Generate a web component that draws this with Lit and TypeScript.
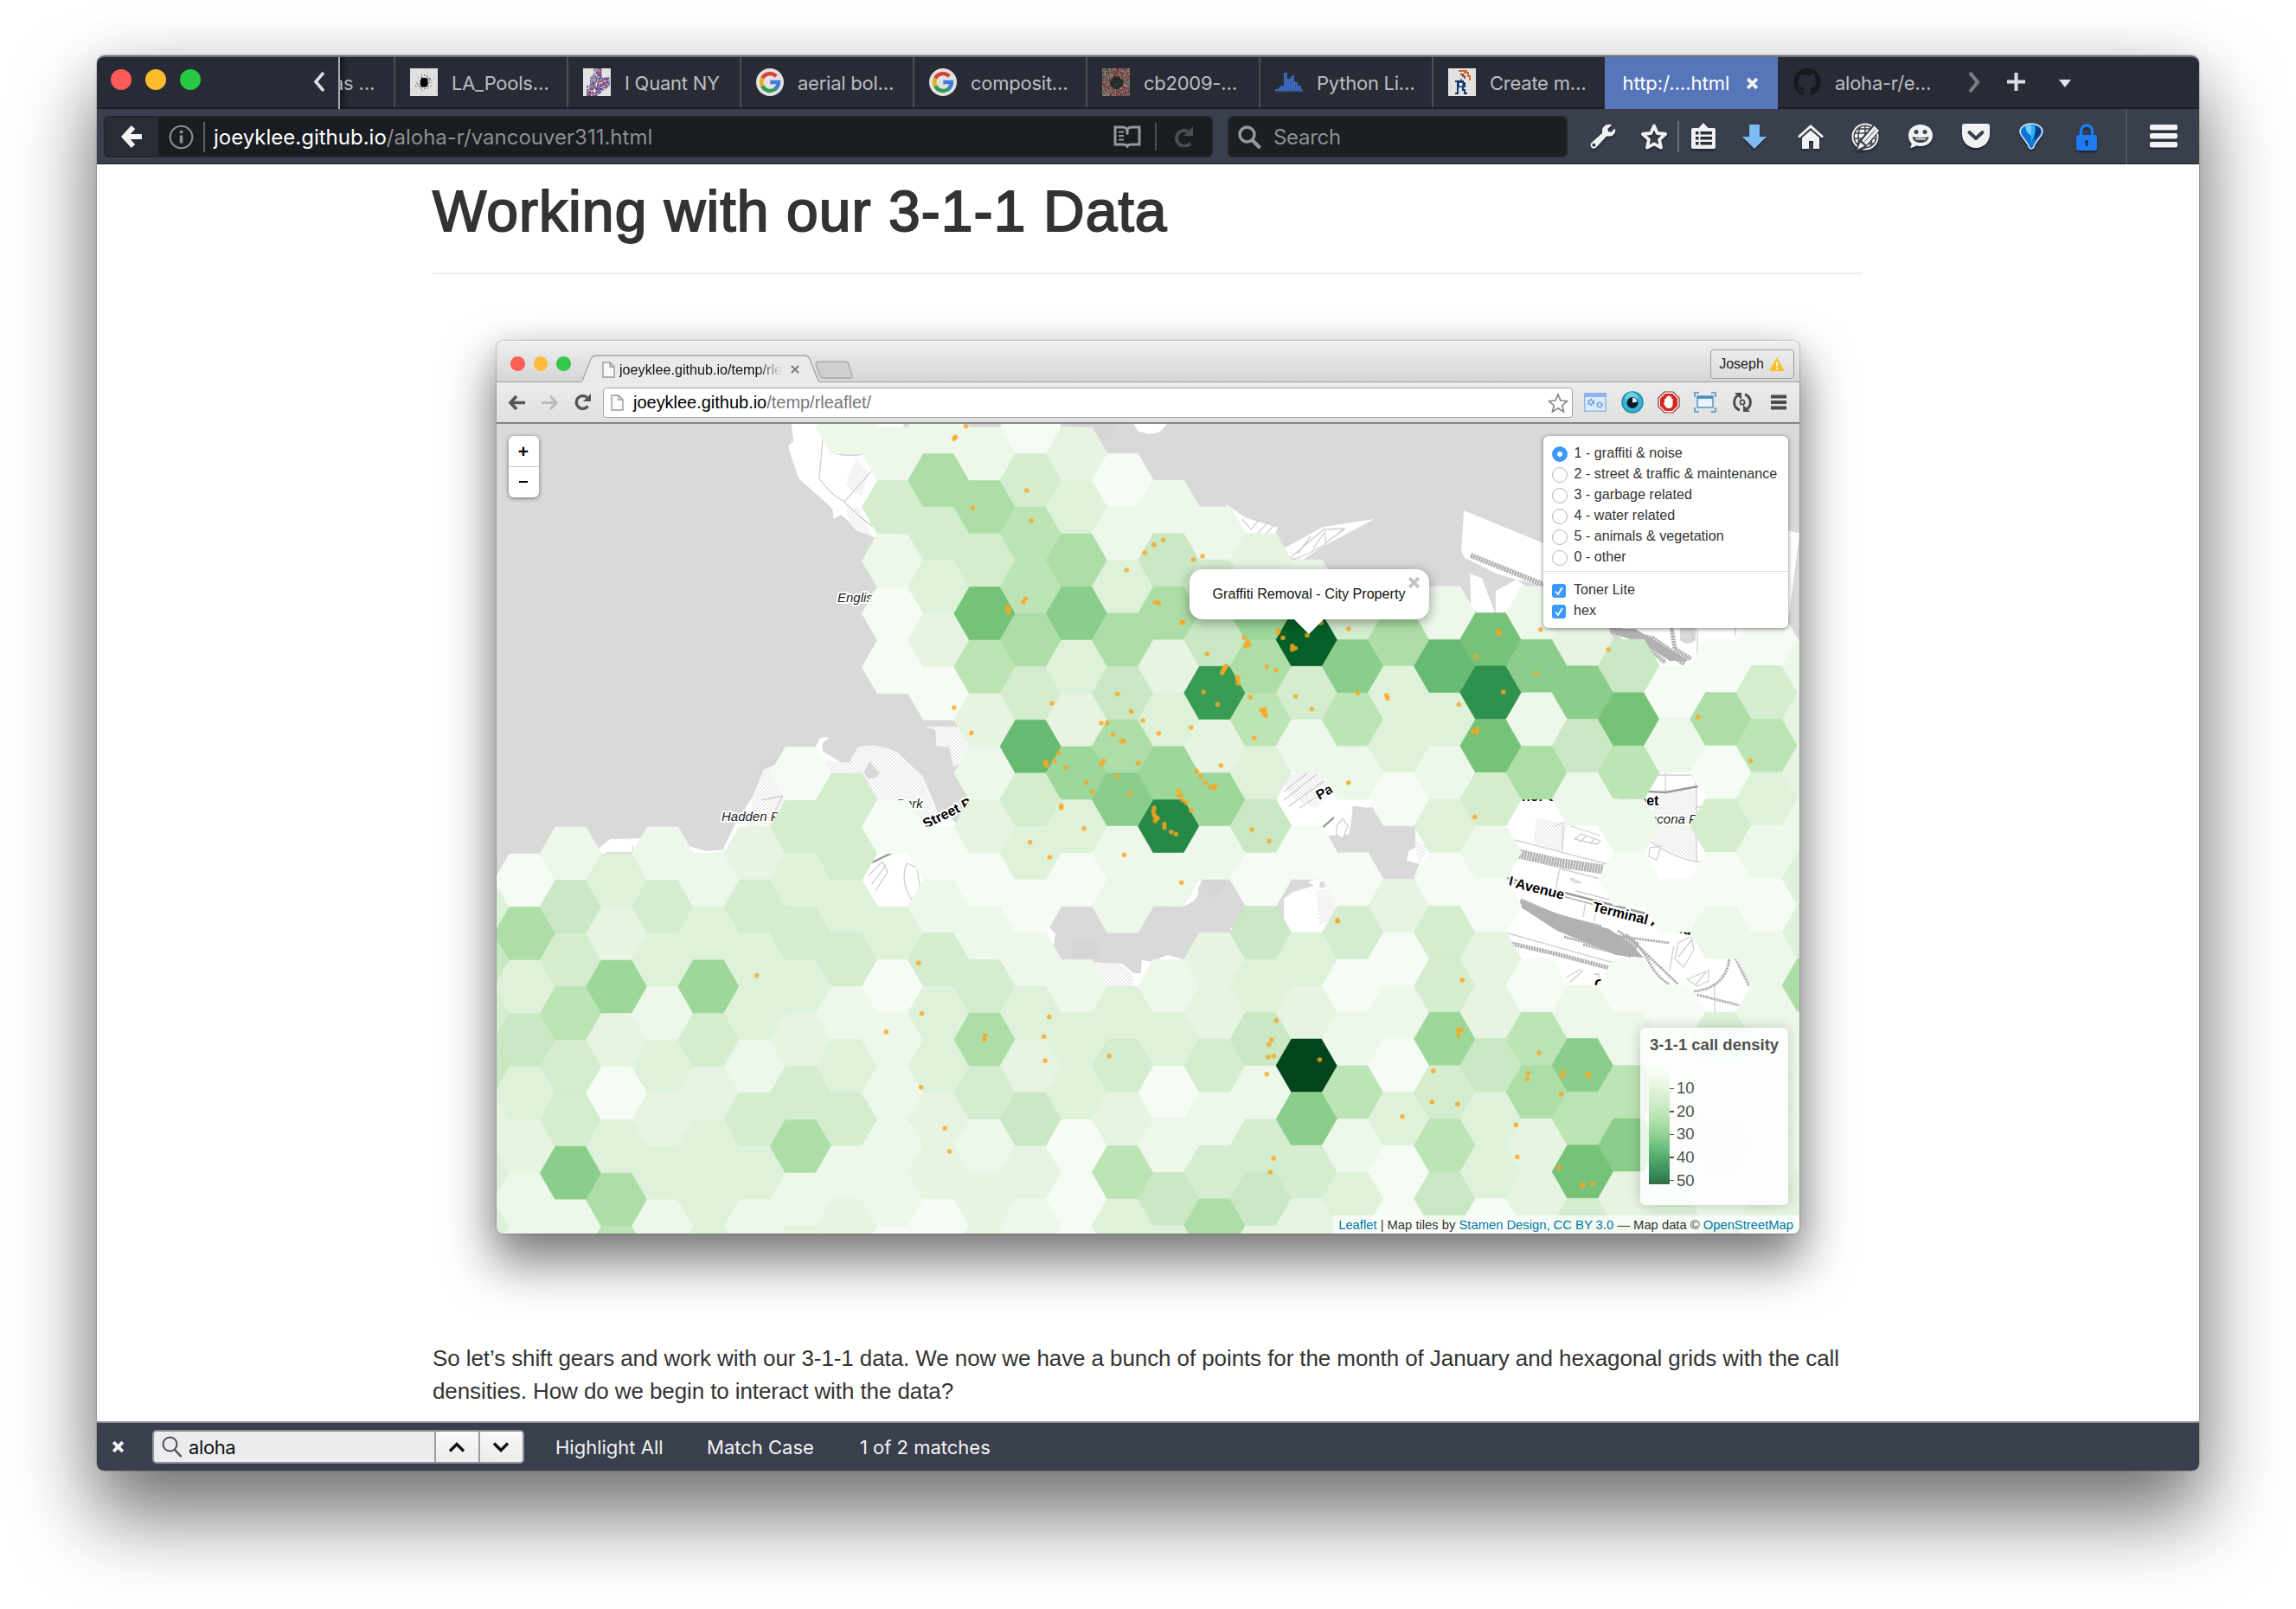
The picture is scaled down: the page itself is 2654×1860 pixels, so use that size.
import { LitElement, html, svg, css } from "lit";
import { customElement } from "lit/decorators.js";
import { classMap } from "lit/directives/class-map.js";

/* ---------- hexagon grid ---------- */

const SHADES: Record<string, string> = {
  a: "#f5fcf3", b: "#edf8eb", c: "#e6f4e1", d: "#def2da", e: "#d3edce", f: "#c9e8c3",
  g: "#bce4b5", h: "#aedea7", i: "#9dd799", j: "#8bcd8b", k: "#76c278", l: "#68ba72",
  m: "#389c54", q: "#2f914e", n: "#268947", o: "#055f28", p: "#02441b",
};

/* One string per column, top to bottom; a dot is a cell with no data. */
const COLUMNS: string[] = [
  "........ahdfdcbb",
  "........bfegeejb",
  "........dcicadhg",
  "........bedbdcdb",
  "........bdiecddd",
  "........ceddbedb",
  "......aededcehbc",
  "b......eedebdebc",
  "bebaa..a.dabbbba",
  "bhedca..abeddcca",
  "bhekgcbcabehebcc",
  "aeggheledabdcfcb",
  "cdhjdcida.bddaaa",
  ".abdhfhjbb.decgd",
  ".bfhcdinb.bdabfd",
  "..befmcib.ccebeh",
  "..cihgdfafdfbefc",
  "...boeb.a.dcpjec",
  "...ejgb.aeabgbdc",
  "....hdda.cabadaa",
  "...bldbdaeeiegfb",
  "....kqkebaccfdda",
  "...bjbh...aghccd",
  "....cjfb...bjgke",
  "....fkgba.abgjce",
  ".....ab..a.abcbd",
  "....ahaeab.dacbg",
  "....aegdbabbbbbc",
  "....bccbddhbbbcc",
];
/* the narrow sliver left of the first full column */
const SLIVER = ".........dfefcdd";

const PITCH_X = 53.18;
const PITCH_Y = 61.55;
const RADIUS = 35.6;

const hexPoints = (cx: number, cy: number) => {
  const h = PITCH_Y / 2;
  const r = RADIUS;
  return [[-r, 0], [-r / 2, -h], [r / 2, -h], [r, 0], [r / 2, h], [-r / 2, h]]
    .map(([x, y]) => `${(cx + x).toFixed(1)},${(cy + y).toFixed(1)}`)
    .join(" ");
};

const column = (cells: string, k: number) =>
  [...cells].map((c, j) => {
    if (c === ".") return null;
    const cx = 606.5 + PITCH_X * k;
    const base = k % 2 === 0 ? 1017.8 : 986.8;
    const cy = base + PITCH_Y * (j - 8) - 0.07 * k;
    const fill = SHADES[c];
    return svg`<polygon points=${hexPoints(cx, cy)} fill=${fill} stroke=${fill} stroke-width=".5"/>`;
  });

/* ---------- call locations ---------- */

interface Batch { x: number; y: number; sx: number; sy: number; at: string }

const BATCHES: Batch[] = [
  {
    x: 1180, y: 600, sx: 3, sy: 3,
    at: "36,6 430,117 462,89 494,73 367,177 598,141 630,129 16,276 8,288 466,288 478,292 558,360 562,356 646,468 774,412 786,426 780,440 792,436 784,432 894,386 892,394 909,412 941,440 941,452 952,448 993,403 1041,360 1136,380 853,512 885,524 712,510 706,518 702,526 698,534 708,514 750,548 752,558 754,570 634,600 682,643 795,617 834,662 846,660 846,668 849,682 842,674 953,615 1009,659 1168,603 1268,611 1272,622 1519,643 335,607 383,667 108,639 279,707 299,707 319,747 348,770 358,770 423,699 478,743 590,723 809,759 407,847 287,839 279,850 132,811 116,838 84,846 90,854 88,842 156,862 228,914 248,946 332,892 379,954 140,994 140,1001 219,1073 32,1121 100,1173 359,1165 694,854 610,874 624,892 640,915 658,930 670,932 674,926 546,942 548,960 554,958 562,974 574,984 590,1010 462,1002 460,1014 462,1026 468,1034 474,1038 466,1046 498,1058 498,1070 522,1085 538,1093 801,1077 861,1117 1136,914",
  },
  { x: 560, y: 380, sx: 2.063, sy: 3, at: "1148,338 1123,375 1120,382 1164,621 1293,561 1248,965 1249,975 1249,984 1120,1314" },
  { x: 1320, y: 380, sx: 2.01, sy: 3, at: "828,1050 831,1058 926,1043 776,1136 1084,1112 916,1195 840,1259 1292,1346" },
  {
    x: 1320, y: 840, sx: 2.01, sy: 2.613,
    at: "769,15 778,8 778,16 1414,103 773,273 454,585 455,588 92,471 744,766 738,916 736,932 735,918 741,915 312,888 301,946 295,960 293,998 306,995 290,1050 413,1006 677,1040 674,1134 733,1140 605,1178 923,985 897,1047 895,1064 979,1045 975,1058 1036,1050 1038,1056 974,1110 869,1203 872,1300 969,1332 1023,1386 1026,1384 1048,1381 306,1304 298,1346",
  },
  {
    x: 560, y: 840, sx: 2.063, sy: 2.613,
    at: "1161,19 649,752 1035,714 1043,867 958,922 1194,933 1192,946 1347,877 1334,936 1337,1009 1490,995 1041,1089 1098,1213 1109,1283",
  },
];

const calls = BATCHES.map((b) =>
  b.at.split(" ").map((p) => {
    const [x, y] = p.split(",").map(Number);
    return svg`<circle cx=${(b.x + x / b.sx).toFixed(1)} cy=${(b.y + y / b.sy).toFixed(1)} r="2.8"/>`;
  }));

/* ---------- pixel favicons ---------- */

const noise = (n: number, pick: (x: number, y: number, r: number) => string | null) => {
  let seed = 7;
  const cells = [];
  for (let y = 0; y < n; y++)
    for (let x = 0; x < n; x++) {
      seed = (seed * 48271) % 2147483647;
      const c = pick(x, y, seed / 2147483647);
      if (c) cells.push(svg`<rect x=${x} y=${y} width="1.05" height="1.05" fill=${c}/>`);
    }
  return cells;
};

const fav = {
  pools: svg`<svg class="fav" viewBox="0 0 32 32"><rect width="32" height="32" fill="#ececec"/>
    ${noise(32, (x, y, r) => { const d = Math.hypot(x - 16, y - 16); return r < 0.7 - d / 16 ? (r < 0.2 ? "#888" : "#b4b4b4") : r > 0.92 ? "#d0d0d0" : null; })}
    <rect x="12" y="11" width="8.500" height="10.500" rx="3" fill="#050505"/></svg>`,
  quant: svg`<svg class="fav" viewBox="0 0 24 24"><rect width="24" height="24" fill="#ececec"/>
    ${noise(24, (x, y, r) => {
      const inside = y < 8 ? x > 9 - y * 0.3 && x < 16 : y < 15 ? x > 5 && x < 23 : x > 2 && x < 22 - (y - 15) * 1.3;
      return inside && r < 0.72 ? ["#b5263b", "#4a3fa0", "#2f6fae", "#6e4fa0", "#c04a55", "#3a3a90"][Math.floor(r * 8.3)] : null;
    })}</svg>`,
  google: svg`<svg class="fav" viewBox="0 0 32 32"><circle cx="16" cy="16" r="16" fill="#ececec"/>
    <g fill="none" stroke-width="4.400"><path d="M23.200 9.200A10 10 0 0 0 7.200 11.400" stroke="#e04436"/>
    <path d="M7.200 11.400A10 10 0 0 0 7.200 20.600" stroke="#f0b41a"/><path d="M7.200 20.600A10 10 0 0 0 22.600 23.600" stroke="#32a350"/>
    <path d="M22.400 23.700A10 10 0 0 0 26 16H16.300" stroke="#427fe6"/></g></svg>`,
  cb: svg`<svg class="fav" viewBox="0 0 24 24"><rect width="24" height="24" fill="#5a4a46"/>
    ${noise(24, (x, y, r) => { const d = Math.hypot(x - 12, y - 12); return d < 5.5 ? (r < 0.6 ? "#20201f" : "#3d2a20") : ["#b93038", "#4f8f7f", "#7b3a35", "#9ab0a6", "#3d5a50", "#c04850"][Math.floor(r * 6)]; })}
    <rect x="12" y="12" width="4" height="3" fill="#0d3c52"/></svg>`,
  python: svg`<svg class="fav" viewBox="0 0 16 16">
    ${[12, 12, 11, 10, 10, 2.5, 2.5, 6, 6, 4.5, 4, 7.5, 8, 10, 10, 12].map((top, x) => svg`<rect x=${x} y=${top} width=".86" height=${13 - top} fill="#3f72d0"/>`)}
    <path d="M0 13.300h16" stroke="#2f4d84" stroke-width=".7"/></svg>`,
  r: svg`<svg class="fav" viewBox="0 0 16 16"><rect width="16" height="16" fill="#ececec"/>
    <path fill="#12366e" d="M4 7h5v1h1v3H9v1h1v2h1v1H9v-2H8v-2H6v4H4v-1h1V8H4z"/><path fill="#fff" d="M6.400 8.400h1.800v1.800H6.400z"/>
    <path fill="#e0672e" d="M6 1h5v1h1v2h1v3h-1V5h-1V3H9V2H6zM7 6h1v1H7z"/><path fill="#7b5560" d="M7 3h2v1h1v2H9V5H8V4H7z"/></svg>`,
  github: svg`<svg class="fav" viewBox="0 0 16 16"><path fill="#16181b" d="M8 0C3.580 0 0 3.580 0 8c0 3.540 2.290 6.530 5.470 7.590.4.070.55-.17.55-.38 0-.19-.01-.82-.01-1.490-2.010.37-2.530-.49-2.690-.94-.09-.23-.48-.94-.82-1.130-.28-.15-.68-.52-.01-.53.63-.01 1.080.58 1.230.82.72 1.210 1.870.87 2.330.66.07-.52.28-.87.51-1.070-1.780-.2-3.640-.89-3.640-3.950 0-.87.31-1.590.82-2.150-.08-.2-.36-1.020.08-2.120 0 0 .67-.21 2.200.82.64-.18 1.320-.27 2-.27s1.360.09 2 .27c1.530-1.040 2.200-.82 2.200-.82.44 1.100.16 1.920.08 2.120.51.56.82 1.270.82 2.150 0 3.070-1.870 3.750-3.650 3.950.29.25.54.73.54 1.480 0 1.070-.01 1.930-.01 2.200 0 .21.15.46.55.38A8.010 8.010 0 0 0 16 8c0-4.420-3.580-8-8-8z"/></svg>`,
};

/* ---------- Firefox toolbar icons ---------- */

const W = "#f1f2f3";
const tools = {
  wrench: svg`<path fill=${W} fill-rule="evenodd" d="M27.200 2.400 22.400 7l.6 3.200 3.400.6 4.400-4.400c1.600 4.600-2 9.400-7 9.200-1.600 0-2.400-.2-3.200.4L10 27.600c-1.400 1.800-4 3-6.200 1.200-2-1.800-1.600-4.800.4-6.400L15.400 12.600c.8-.8.8-1.800.6-3.200C15.800 4.400 21.800 0 27.200 2.400zM6.400 23.800a1.900 1.900 0 1 0 .01 0z"/>`,
  star: svg`<path fill="none" stroke=${W} stroke-width="3.800" stroke-linejoin="round" d="m16 3.400 3.700 8.600 9.300 1-6.900 6.400 1.900 9.200L16 24.400l-8 4.200 1.900-9.200L3 13l9.300-1z"/>`,
  list: svg`<path fill=${W} fill-rule="evenodd" d="M4 6h6.500L16 0l5.500 6H28q2 0 2 2v20q0 2-2 2H4q-2 0-2-2V8q0-2 2-2zM7 10v3.500h3.500V10zM12.500 10v3.500H26V10zM7 16v3.500h3.500V16zM12.500 16v3.500H26V16zM7 22v3.500h3.500V22zM12.500 22v3.500H26V22z"/>`,
  down: svg`<path fill="#7cbcf3" d="M10 2h12v14h8L16 30 2 16h8z"/>`,
  home: svg`<path fill=${W} d="M16 2 31 15.500l-2 2L16 6 3 17.500l-2-2z"/><path fill=${W} d="M6 17.200 16 8.400l10 8.800V30h-7V21h-5v9H6z"/>`,
  globe: svg`<circle cx="16" cy="16" r="15.500" fill=${W}/>
    <g fill="none" stroke="#3a3f4d" stroke-width="1.500"><circle cx="16" cy="16" r="12.800"/><path d="M4 12h24M4 18h24M6 24h20M6.500 7h19"/><path d="M16 3v26M10 5q-4 11 0 22M22 5q4 11 0 22"/></g>
    <path d="M5 33 8 21.500 25.500 2l7.500 7-17.500 21z" fill="#3a3f4d"/><path fill=${W} d="m26.500 3.500 5.500 5.500-14.500 16.500-5.500-5zM10.500 22.500l4.800 4.300L7 30.800z"/><path d="m15.500 21.500 12.500-13.700" stroke="#3a3f4d" stroke-width="1"/>`,
  smile: svg`<path fill=${W} d="M16 2c8 0 14 5 14 12.500S24 27 16 27c-2 0-3.500-.2-5-.7-2 1.700-4.500 2.700-7.500 2.400 1.500-1.200 2.200-2.800 2.200-4.700C3.200 21.500 2 18.500 2 14.500 2 7 8 2 16 2z"/><g fill="#3a3f4d"><circle cx="11" cy="10.500" r="2.500"/><circle cx="21" cy="10.500" r="2.500"/><path d="M6.500 16c3 1.500 16 1.500 19 0-1 5-4.500 7-9.500 7s-8.500-2-9.500-7z"/></g><path d="M10 18.700h12" stroke=${W} stroke-width="1.600"/>`,
  pocket: svg`<path fill=${W} d="M3 1h26q3 0 3 3v9c0 9-7 16-16 16S0 22 0 13V4q0-3 3-3z"/><path d="m8.500 11 7.500 7 7.500-7" fill="none" stroke="#3a3f4d" stroke-width="4" stroke-linecap="round" stroke-linejoin="round"/>`,
  pin: svg`<path fill="#0b74d8" stroke="#d8e6f2" stroke-width="1.600" d="M16 1C8 1 3 5.500 3 10c0 6 8.500 10.500 10.500 18.500q2.500 3 5 0C20.500 20.500 29 16 29 10c0-4.500-5-9-13-9z"/><path fill="#6fd0ff" d="M9 3.800Q12 2 16 2v13Q10 12 9 3.800z"/><path fill="#053c86" d="M20 3q7 2 7 7c0 4-5 7-7.500 11z"/><path fill="#2fb0f5" d="M16 3h4q2 6-1 12l-3 8z"/>`,
  lock: svg`<path d="M9.500 16V9.500a6.500 6.500 0 0 1 13 0V16" fill="none" stroke="#1f7bf2" stroke-width="3.600"/><rect x="4" y="14" width="24" height="18" rx="2.500" fill="#1f7bf2"/><path fill="#1b2c4d" d="M16 20a2 2 0 0 1 1.200 3.600V27h-2.400v-3.400A2 2 0 0 1 16 20z"/>`,
  menu: svg`<g fill=${W}><rect y="2" width="32" height="6.400" rx="2"/><rect y="12" width="32" height="6.400" rx="2"/><rect y="22" width="32" height="6.400" rx="2"/></g>`,
};
const icon = (body: unknown) => html`<svg class="tool" viewBox="0 0 32 32">${body}</svg>`;

interface Tab { label: string; icon?: unknown; active?: boolean }
const TABS: Tab[] = [
  { label: "LA_Pools…", icon: fav.pools },
  { label: "I Quant NY", icon: fav.quant },
  { label: "aerial bol…", icon: fav.google },
  { label: "composit…", icon: fav.google },
  { label: "cb2009-…", icon: fav.cb },
  { label: "Python Li…", icon: fav.python },
  { label: "Create m…", icon: fav.r },
  { label: "http:/….html", active: true },
  { label: "aloha-r/e…", icon: fav.github },
];

const closeX = svg`<svg class="x" viewBox="0 0 14 14"><path d="m2 2 10 10M12 2 2 12" stroke="#f1f2f3" stroke-width="3.600" fill="none"/></svg>`;

/* ---------- hex map window ---------- */

@customElement("hex-map")
export class HexMap extends LitElement {
  static styles = css`
    :host { display: block; position: relative; height: 936px; background: #d9d9d9; overflow: hidden;
      font-family: "Liberation Sans", Arial, sans-serif; color: #333; }
    .canvas { display: block; width: 1506px; height: 936px; }
    .panel { position: absolute; background: #fff; border-radius: 6px; box-shadow: 0 1px 5px rgba(0,0,0,.5); }
    .zoom { left: 13.500px; top: 13.500px; width: 35px; height: 71px; display: flex; flex-direction: column; }
    .zoom span { flex: 1; display: flex; align-items: center; justify-content: center; font-weight: bold; font-size: 21px; line-height: 1; color: #000; }
    .zoom span + span { border-top: 1px solid #ccc; }
    .zoom .minus i { width: 10px; height: 2.500px; background: #000; }
    .layers { left: 1210px; top: 13.500px; width: 283px; height: 222.500px; font-size: 16.100px; }
    .group { display: flex; flex-direction: column; padding: 8.500px 0 0 10px; }
    .group + .group { border-top: 1.500px solid #ddd; margin-top: 5px; padding: 8px 0 0 10px; }
    .row { display: flex; align-items: center; height: 23.900px; gap: 8px; white-space: nowrap; letter-spacing: .02px; }
    .radio { box-sizing: border-box; width: 18px; height: 18px; margin: 3px 0 0 -.5px; border: 1.500px solid #b4b4b4; border-radius: 50%; background: #fff; }
    .radio.on { border: 6.500px solid #3b99fc; }
    .check { width: 16px; height: 16px; margin: 3px 1px 0 0; }
    .popup { left: 800.500px; top: 167.500px; width: 277px; height: 58.500px; border-radius: 15px; box-shadow: 0 3px 14px rgba(0,0,0,.4);
      display: flex; align-items: center; justify-content: center; font-size: 16.150px; color: #111; }
    .popup::after { content: ""; position: absolute; left: 121px; top: 58px; border: 17px solid transparent; border-top-color: #fff; border-bottom: 0; }
    .close { position: absolute; right: 10px; top: 8.500px; width: 15px; height: 15px; }
    .legend { left: 1322px; top: 697.500px; width: 171px; height: 205px; background: rgba(255,255,255,.82); box-shadow: 0 0 15px rgba(0,0,0,.2); color: #505050; }
    .legend h4 { margin: 10px 0 0 11px; font-size: 18.500px; line-height: 20px; white-space: nowrap; }
    .scale { display: flex; margin: 19px 0 0 10px; }
    .ramp { width: 24px; height: 132px; opacity: .8;
      background: linear-gradient(#f7fcf5, #e5f5e0 12%, #c7e9c0 28%, #a1d99b 44%, #74c476 58%, #41ab5d 70%, #238b45 80%, #006d2c 92%, #00441b); }
    .marks { display: flex; flex-direction: column; padding-top: 8.500px; font-size: 18.500px; }
    .marks span { display: flex; align-items: center; height: 26.600px; gap: 3px; }
    .marks i { width: 5px; height: 1.500px; background: #555; }
    .credit { position: absolute; right: 0; bottom: 0; height: 21px; box-sizing: border-box; padding: 1px 7px 0 6px; line-height: 20px; font-size: 14.780px; background: rgba(255,255,255,.7); white-space: nowrap; }
    .credit b { font-weight: normal; color: #0078a8; }
    .place { font-family: "Liberation Sans", Arial, sans-serif; font-size: 15px; fill: #1c1c1c; paint-order: stroke; stroke: #fff; stroke-width: 4px; stroke-linejoin: round; }
    .it { font-style: italic; }
    .road { font-weight: bold; fill: #000; font-size: 16px; }
  `;

  private land() {
    return svg`
      <g fill="#fff">
        <g transform="translate(560 380) scale(.4847 .3333)">
          <path d="M732 330 737 390 725 405 728 430 750 520 800 585 830 625 833 660 850 645 870 670 885 700 926 722 970 720 1000 330z"/>
        </g>
        <g transform="translate(1320 380) scale(.4975 .3333)">
          <path d="M-20 325H60Q45 368 15 365L-10 355zM195 608 240 655 315 690 308 715H200zM320 770 420 688 540 660 420 755 375 800H345zM748 630 935 745V890L870 870 825 850 750 795 742 770zM762 850 790 865 820 985H765zM822 910 870 870 890 890 850 985H822zM1085 1030H1500L1528 710 1500 700V1200H1200z"/>
        </g>
        <g transform="translate(560 840) scale(.4847 .3827)">
          <path d="M270 370 300 340 370 338V384H275zM490 362 530 376 568 372 600 290 640 210 665 130 720 100 790 60 800 35Q825 28 820 38 800 45 808 75L850 108H870L890 62Q930 45 985 78L1045 148 1065 210 1085 272H1110L1130 300V420L1060 560 880 560 880 300H700V400H480zM1050 0H1160V100L1118 120 1108 62 1078 58 1075 10zM1342 600 1362 625 1358 655 1340 660zM1452 712 1520 716 1550 745 1580 745V800H1450z"/>
        </g>
        <g transform="translate(1320 840) scale(.4975 .3827)">
          <path d="M300 120H560V235L525 245 490 240 485 300 480 325 433 330 440 370 330 360zM635 300 670 380 630 460 645 415 615 405 620 375 635 365zM70 540Q100 548 108 535 135 520 130 490L140 460H60V540zM350 500 400 480 385 470 400 462H460V625H330V520zM0 705 20 710 60 690 90 700 80 860H-10zM205 610 220 600V640z"/>
          <path d="M840 110H1430V880H840z"/>
        </g>
      </g>
      <path fill="#d9d9d9" d="M1526 1020q6-4 7 3-4 6-8 2zM1942 725h18v15q-9 8-18 0z"/>
      <g fill="url(#dots)">
        <path d="M977 560 990 530 1004 545 996 575zM977 590 992 585 1008 620 990 618zM1243 490h50l-8 18h-25zM829 985 860 970 880 880 920 870 960 880 970 881 982 880 992 862Q1010 857 1038 870L1066 895 1078 930 1090 945 1070 960 980 930 900 1000 800 990zM1075 840H1120V880L1102 885 1096 864 1082 862zM1239 1088H1270V1108H1239zM1265 1114 1290 1113 1310 1125V1150H1265zM1388 1016H1424L1400 1040zM1484 900 1500 893 1535 893 1543 915 1520 934 1490 920zM1522 1030 1542 1026 1545 1060 1525 1070zM1776 945 1812 953 1805 985 1772 975zM1913 920 1962 909V995Q1930 988 1905 970zM1635 970 1652 980 1640 1000z"/>
      </g>
      <path fill="#d9d9d9" d="M999 893q5-14 8-12 3 8 10 12l-4 6-8 1q-4-2-6-7z"/>`;
  }

  private streets() {
    return svg`
      <g fill="none" stroke="#cfcfcf" stroke-width="1.300">
        <path d="M951 508 947 553Q960 572 976 580L1007 545M976 580Q990 595 1008 608M964 524Q980 528 998 525M1004 1012 1020 996 1026 1008 1012 1030M1008 1022 1024 1000M1048 998Q1040 1020 1054 1040L1064 1030 1060 1003 1048 998M700 986H732L731 978M880 925 905 920 890 948"/>
        <path d="M1436 600 1446 612M1446 612 1456 600M1452 618 1466 604M1462 618 1474 606M1490 646 1530 612 1554 611 1530 630 1512 640 1498 646zM1500 640 1515 620M1518 634 1532 614M1532 616V628L1554 612M1700 790V700M1705 705 1712 860 1706 870M1735 870 1752 830M1732 862 1748 825M1962 728V762M2006 725V735M1958 740 1950 720"/>
        <path d="M1484 915 1512 893M1484 925 1522 895M1490 932 1530 903M1502 934 1534 913"/>
        <path d="M1751 971 1862 1000M1740 1078 1865 1113M1807 954 1806 984M1803 1004 1798 1028M1803 1004 1850 1016M1797 955 1810 950M1816 955 1850 966M1820 970 1828 964 1850 972 1846 976zM1826 974 1834 966M1838 976 1844 968M1925 882V916M1915 896H1956M1960 894V910M1960 933H1966M1961 910V996H1968M1905 971Q1930 990 1960 996M1907 980 1920 978 1915 994 1906 990zM1822 1030 1860 1040M1815 1015 1828 1020 1820 1020zM1845 1045 1843 1065M1833 1042 1830 1060M1935 1093 1930 1122M1940 1090 1955 1082 1958 1098 1946 1118 1936 1108zM1940 1106 1956 1086M1950 1132 1975 1122V1134L1962 1140zM1960 1138 1972 1124M1810 1130 1828 1120M1814 1136 1830 1122M1842 1126H1848V1138M1982 1138V1170"/>
        <path d="M1545 955 1552 946 1558 955 1552 970 1545 965zM1630 1030 1638 1020 1647 1024 1644 1040 1632 1046z" fill="#fff"/>
      </g>
      <g fill="none" stroke="#9b9b9b">
        <path stroke-width="2.400" d="M1494 987 1542 945M1742 1015 1906 1057M1905 915 1925 916 1963 909M1006 998 1033 985"/>
        <path stroke="#b0b0b0" stroke-width="1.500" d="M1742 1019 1900 1061"/>
      </g>
      <g fill="none" stroke="#b1b1b1" stroke-dasharray="2.400 .8">
        <path stroke-width="11" d="M1756 987 1800 997 1853 1005"/>
        <path stroke-width="10" d="M1757 1043 1800 1062 1850 1074"/>
        <path stroke-width="18" d="M1810 1070 1850 1082 1892 1098"/>
        <path stroke-width="5" d="M1748 1091 1800 1103 1860 1119"/>
        <path stroke-width="3" d="M1806 1074 1930 1090M1808 1083 1890 1104M1830 1092 1886 1106M1870 1076Q1895 1090 1905 1110T1930 1138M1880 1080Q1905 1105 1940 1138M1958 1146Q1995 1142 1999 1108M2006 1108 2022 1140M2010 1112 2024 1135M1962 1150 2010 1162"/>
        <path stroke-width="6" d="M1700 642 1785 676"/>
        <path stroke-width="9" d="M1862 728 1910 740 1948 766"/>
        <path stroke-width="5" d="M1932 725 1936 750 1955 762M1900 745 1925 766"/>
      </g>
      <path fill="#b1b1b1" d="M1757 1040 1800 1056 1860 1074 1886 1092 1900 1107 1868 1104 1830 1088 1800 1076 1760 1050zM1862 727H1890L1925 748 1952 764 1930 764 1900 744 1870 734z"/>
      <text class="place it" x="968" y="695.500">English Bay</text>
      <text class="place it" x="834" y="948.500">Hadden Park</text>
      <text class="place it" x="1036" y="934">Park</text>
      <text class="place road" transform="translate(1070 958) rotate(-26)">Street P</text>
      <text class="place road" transform="translate(1525 925) rotate(-30)">Pacific</text>
      <text class="place road" x="1759" y="926">nor S</text>
      <text class="place road" x="1872" y="931">Street</text>
      <text class="place it" x="1907" y="952">acona P</text>
      <text class="place road" transform="translate(1743 1024) rotate(14)">l Avenue</text>
      <text class="place road" transform="translate(1840 1053) rotate(14)">Terminal Avenue</text>
      <text class="place road" x="1843" y="1144">C</text>`;
  }

  render() {
    const rows = ["1 - graffiti & noise", "2 - street & traffic & maintenance", "3 - garbage related", "4 - water related", "5 - animals & vegetation", "0 - other"];
    const tick = svg`<svg class="check" viewBox="0 0 16 16"><rect width="16" height="16" rx="3" fill="#3b99fc"/><path d="m4 8.500 3 3.500 5-8" fill="none" stroke="#fff" stroke-width="1.800"/></svg>`;
    return html`
      <svg class="canvas" viewBox="574 490 1506 936">
        <defs><pattern id="dots" width="4" height="4" patternUnits="userSpaceOnUse"><circle cx="1" cy="1" r=".7" fill="#c4c4c4"/><circle cx="3" cy="3" r=".7" fill="#c4c4c4"/></pattern></defs>
        ${this.land()}${this.streets()}
        <g>${column(SLIVER, -1)}${COLUMNS.map(column)}</g>
        <g fill="#fba51f" fill-opacity=".8">${calls}</g>
      </svg>
      <div class="panel zoom"><span>+</span><span class="minus"><i></i></span></div>
      <div class="panel popup">Graffiti Removal - City Property
        <svg class="close" viewBox="0 0 14 14"><path d="m2 2 10 10M12 2 2 12" stroke="#c3c3c3" stroke-width="3.400"/></svg>
      </div>
      <div class="panel layers">
        <div class="group">${rows.map((t, i) => html`<div class="row"><span class=${classMap({ radio: true, on: i === 0 })}></span>${t}</div>`)}</div>
        <div class="group">${["Toner Lite", "hex"].map((t) => html`<div class="row">${tick}${t}</div>`)}</div>
      </div>
      <div class="panel legend">
        <h4>3-1-1 call density</h4>
        <div class="scale"><div class="ramp"></div>
          <div class="marks">${[10, 20, 30, 40, 50].map((n) => html`<span><i></i>${n}</span>`)}</div></div>
      </div>
      <div class="credit"><b>Leaflet</b> | Map tiles by <b>Stamen Design, CC BY 3.0</b> — Map data © <b>OpenStreetMap</b></div>`;
  }
}

/* ---------- Chrome window inside the article ---------- */

const pageIcon = svg`<svg class="page" viewBox="0 0 15 19"><path d="M1 1h8l5 5v12H1zM9 1v5h5" fill="#fafafa" stroke="#9a9a9a" stroke-width="1.400"/></svg>`;

@customElement("chrome-window")
export class ChromeWindow extends LitElement {
  static styles = css`
    :host { display: block; width: 1506px; height: 1032px; border-radius: 8px; overflow: hidden; background: #e4e4e4;
      font-family: "Liberation Sans", Arial, sans-serif; }
    svg { display: block; flex: none; }
    .strip { display: flex; height: 47px; box-sizing: border-box; background: linear-gradient(#efefef, #d5d5d5); border-top: 1px solid #f8f8f8; }
    .lights { display: flex; gap: 10px; margin: 17px 0 0 16px; width: 83px; }
    .lights i { width: 16.500px; height: 16.500px; border-radius: 50%; background: #fb5f57; }
    .lights i:nth-child(2) { background: #fdbc40; }
    .lights i:nth-child(3) { background: #34c84a; }
    .tab { position: relative; width: 274px; height: 32px; margin-top: 15px; display: flex; align-items: center; }
    .shape { position: absolute; left: 0; top: 0; }
    .page { position: relative; width: 15px; height: 19px; }
    .tab .page { margin: 2px 0 0 23px; }
    .tab span { position: relative; margin: 1px 0 0 5px; width: 190px; overflow: hidden; white-space: nowrap; font-size: 16.200px; line-height: 20px; color: #111;
      -webkit-mask-image: linear-gradient(90deg, #000 84%, transparent 99%); mask-image: linear-gradient(90deg, #000 84%, transparent 99%); }
    .tab .tx { position: relative; margin: 1px 0 0 8px; width: 10px; height: 10px; }
    .new { margin: 21.500px 0 0 -5px; }
    .user { margin: 8.500px 6.500px 0 auto; box-sizing: border-box; height: 34px; width: 97px; border: 1.500px solid #9c9c9c; border-radius: 4px; background: linear-gradient(#ececec, #dedede);
      display: flex; align-items: center; justify-content: center; gap: 6px; font-size: 16px; color: #222; }
    .bar { display: flex; align-items: center; height: 49px; box-sizing: border-box; border-bottom: 2px solid #868686; border-top: 1px solid #9f9f9f; background: linear-gradient(#ececec, #e0e0e0); }
    .nav { display: flex; align-items: center; gap: 17px; margin-left: 13px; width: 110px; }
    .omni { flex: none; width: 1121px; height: 35px; box-sizing: border-box; border: 1.500px solid #a5a5a5; border-radius: 4px; background: #fff; display: flex; align-items: center; padding: 1px 4px 0 8px; font-size: 20px; color: #777; }
    .omni span { margin: 0 auto 0 11px; white-space: nowrap; letter-spacing: -.02px; }
    .omni em { font-style: normal; color: #000; }
    .ext { display: grid; grid-template-columns: repeat(6, 42.400px); align-items: center; justify-items: center; margin-left: 5px; }
  `;
  render() {
    return html`
      <div class="strip">
        <div class="lights"><i></i><i></i><i></i></div>
        <div class="tab">
          <svg class="shape" width="274" height="32" viewBox="0 0 274 32"><path d="M-2 32Q0 31 1 28L10 5q2-4 6-4h241q4 0 6 4l9 23q1 3 3 4" fill="#eaeaea" stroke="#a4a4a4" stroke-width="1.300"/></svg>
          ${pageIcon}<span>joeyklee.github.io/temp/rleaflet/</span>
          <svg class="tx" viewBox="0 0 11 11"><path d="m1 1 9 9M10 1 1 10" stroke="#777" stroke-width="2.200"/></svg>
        </div>
        <svg class="new" width="44" height="22" viewBox="0 0 44 22"><path d="M4 1h30q4 0 5 3l4 13q1 3-3 3H11q-4 0-5-3L1 5Q1 1 4 1z" fill="#cfcfcf" stroke="#aaa" stroke-width="1.300"/></svg>
        <div class="user">Joseph
          <svg width="18" height="16" viewBox="0 0 18 16"><path d="M9 0 18 16H0z" fill="#fbc02d"/><path d="M9 5v5.500M9 12v2" stroke="#fff" stroke-width="1.600"/></svg>
        </div>
      </div>
      <div class="bar">
        <div class="nav">
          <svg width="21" height="19" viewBox="0 0 21 19"><path d="M20 9.500H4M10 2 3 9.500l7 7.500" fill="none" stroke="#555" stroke-width="3.600"/></svg>
          <svg width="21" height="19" viewBox="0 0 21 19"><path d="M1 9.500h16M11 2l7 7.500-7 7.500" fill="none" stroke="#bcbcbc" stroke-width="3.200"/></svg>
          <svg width="21" height="20" viewBox="0 0 21 20"><path d="M16.500 14.500A7.400 7.400 0 1 1 15.500 4.500" fill="none" stroke="#555" stroke-width="3.400"/><path d="M20 0v9h-9z" fill="#555"/></svg>
        </div>
        <div class="omni">${pageIcon}<span><em>joeyklee.github.io</em>/temp/rleaflet/</span>
          <svg width="24" height="24" viewBox="0 0 24 24"><path d="m12 2 3 7 7.500.7-5.700 5 1.700 7.300-6.500-4-6.500 4 1.700-7.300-5.700-5L9 9z" fill="#fff" stroke="#888" stroke-width="1.700"/></svg></div>
        <div class="ext">
          <svg width="26" height="22" viewBox="0 0 26 22"><rect x=".7" y=".7" width="24.600" height="20.600" fill="#dbe9fa" stroke="#8fb4e3" stroke-width="1.400"/><path d="M1 1h24v4H1z" fill="#8db5ea"/><circle cx="8" cy="11" r="2.800" fill="none" stroke="#5f93d6" stroke-width="2.400" stroke-dasharray="2 1"/><circle cx="18" cy="14" r="2.800" fill="none" stroke="#5f93d6" stroke-width="2" stroke-dasharray="2 1"/></svg>
          <svg width="26" height="26" viewBox="0 0 26 26"><circle cx="13" cy="13" r="12" fill="#35b3d3" stroke="#1b7f9e" stroke-width="1.400"/><circle cx="12" cy="8" r="7" fill="#7fdcee" opacity=".7"/><circle cx="13" cy="13.500" r="6.500" fill="#0b1c26"/><path d="M13 13.500V7.500a6 6 0 0 1 5.500 5z" fill="#dff5fb"/></svg>
          <svg width="26" height="26" viewBox="0 0 26 26"><path d="M8 1h10l7 7v10l-7 7H8l-7-7V8z" fill="#fff" stroke="#8a3030" stroke-width="1.200"/><path d="M8.800 3h8.400L23 8.800v8.400L17.200 23H8.800L3 17.200V8.800z" fill="#da2420"/><path d="M8 13V9h2V6.500h2V5.500h2v1h2V9h1.600v6c0 3-1.600 5-4.600 5S9 18 7 14z" fill="#fff"/></svg>
          <svg width="26" height="24" viewBox="0 0 26 24"><path d="M1 6V1h5M20 1h5v5M25 18v5h-5M6 23H1v-5" fill="none" stroke="#4b93bd" stroke-width="1.600"/><rect x="4" y="5" width="18" height="13" fill="#e9f2f8" stroke="#4b93bd" stroke-width="1.400"/><path d="M4 6.500h18" stroke="#4b93bd" stroke-width="3"/></svg>
          <svg width="24" height="24" viewBox="0 0 24 24"><path d="M8 3.500a9.500 9.500 0 0 0 1 17.500M16 20.500A9.500 9.500 0 0 0 15 3" fill="none" stroke="#4c4c4c" stroke-width="3"/><path d="M3 1h8v8zM21 23h-8v-8z" fill="#4c4c4c"/><circle cx="12" cy="12" r="2.600" fill="none" stroke="#4c4c4c" stroke-width="1.800"/></svg>
          <svg width="18" height="18" viewBox="0 0 18 18"><path d="M0 2.500h18M0 9h18M0 15.500h18" stroke="#4c4c4c" stroke-width="3.800"/></svg>
        </div>
      </div>
      <hex-map></hex-map>`;
  }
}

/* ---------- Firefox window on the desktop ---------- */

@customElement("app-root")
export class AppRoot extends LitElement {
  static styles = css`
    :host { display: block; width: 2654px; height: 1860px; box-sizing: border-box; padding: 64px 112px 160px; background: #fff; overflow: hidden;
      font-family: Inter, "Liberation Sans", sans-serif; }
    svg { display: block; flex: none; }
    .window { display: flex; flex-direction: column; width: 2430px; height: 1636px; border-radius: 9px;
      box-shadow: 0 50px 90px 4px rgba(0,0,0,.53), 0 0 60px rgba(0,0,0,.08), 0 0 2px rgba(0,0,0,.55); }
    .tabs { display: flex; height: 62px; box-sizing: border-box; background: #282b35; border-top: 2px solid #6c7077; border-bottom: 2px solid #1c1e26; border-radius: 9px 9px 0 0; }
    .lights { display: flex; gap: 16px; margin: 14px 0 0 16px; width: 234px; }
    .lights i { width: 24px; height: 24px; border-radius: 50%; background: #fc5b57; }
    .lights i:nth-child(2) { background: #fdbc2e; }
    .lights i:nth-child(3) { background: #28c940; }
    .chev { margin-top: 16px; }
    .clip { display: flex; align-items: center; box-sizing: border-box; width: 64px; margin: 0 0 -2px 15px; border-left: 2px solid #a9abb0; box-shadow: inset 8px 0 6px -4px #15171c; color: #b4b6ba; font-size: 22px; overflow: hidden; white-space: nowrap; }
    .clip span { margin-left: -8px; letter-spacing: -.25px; }
    .tab { display: flex; align-items: center; box-sizing: border-box; width: 200px; padding: 2px 0 0 17px; border-left: 2px solid #4b4e57; gap: 16px; color: #bcbdc1; font-size: 22px; letter-spacing: -.25px; white-space: nowrap; }
    .tab.active { background: #5776b9; color: #fff; border-color: #5776b9; margin-bottom: -2px; padding: 0 0 0 18.500px; letter-spacing: 0; gap: 19px; }
    .tab.active + .tab { border-color: transparent; padding-left: 16px; }
    .fav { width: 32px; height: 32px; margin-top: -2px; opacity: .95; }
    .x { width: 15px; height: 15px; }
    .ctl { display: flex; align-items: center; margin: 0 0 1px 18px; }
    .plus { margin-left: 29px; }
    .tri { margin: 3px 0 0 39px; }

    .navbar { display: flex; height: 64px; box-sizing: border-box; background: #3a3f4d; border-bottom: 2px solid #2c303b; padding: 8px 0 0 8px; }
    .url, .search { display: flex; align-items: center; height: 48px; box-sizing: border-box; border: 2px solid #23262d; border-radius: 6px; background: #191c20; font-size: 24px; color: #8d8f92; white-space: nowrap; }
    .url { width: 1282px; margin-right: 17px; }
    .url > span { padding-top: 1px; }
    .back { display: flex; align-items: center; justify-content: center; width: 61px; height: 44px; background: #272c35; border-radius: 4px 0 0 4px; }
    .info { margin-left: 12px; }
    .sep { width: 2px; height: 35px; background: #5d6065; margin: 0 10px 0 11px; }
    .url b { font-weight: normal; color: #fff; }
    .reader { margin-left: auto; }
    .url .sep2 { width: 2px; height: 32px; background: #4c4f54; margin: 0 20px 0 16px; }
    .reload { margin-right: 20px; }
    .search { width: 393px; background: #1a1f22; padding: 1px 0 0 10px; gap: 13px; letter-spacing: -.3px; }
    .tools { display: grid; grid-template-columns: 64px 56px 55px 66px 63px 64px 64px 64px 64px 64px 13px 85px; margin: -8px 0 0 8px; height: 64px; align-items: center; justify-items: center; }
    .tool { width: 32px; height: 32px; overflow: visible; filter: drop-shadow(0 2px 1px rgba(0,0,0,.45)); }
    .mark { width: 100%; display: flex; justify-content: center; box-sizing: border-box; }
    .split { border-left: 2px solid #6c707a; height: 36px; align-items: center; width: calc(100% + 2px); }
    .edge { border-left: 2px solid #50545f; height: 64px; align-items: center; grid-column: 12; }

    .page { flex: 1; background: #fff; min-height: 0; padding: 0 389px 0 388px; font-family: "Liberation Sans", Arial, sans-serif; color: #333; }
    h1 { margin: 0; padding: 17px 0 33px; height: 75px; line-height: 75px; font-size: 66px; font-weight: normal; letter-spacing: 1.080px; -webkit-text-stroke: 1.900px #333; border-bottom: 2px solid #eee; white-space: nowrap; }
    .shot { margin: 77px 0 0 74px; width: 1506px; border-radius: 8px; box-shadow: 0 30px 56px 4px rgba(0,0,0,.5), 0 0 30px rgba(0,0,0,.08), 0 0 2px rgba(0,0,0,.5); }
    p { margin: 126px 0 0; font-size: 26px; line-height: 37.500px; letter-spacing: -.095px; white-space: nowrap; }

    .find { display: flex; align-items: center; height: 57px; box-sizing: border-box; border-top: 2.500px solid #8a8c90; background: #3a3f4d; border-radius: 0 0 8px 8px; font-size: 22px; color: #f3f3f4; }
    .find .x { margin: 0 32px 0 16.500px; }
    .field { display: flex; width: 430px; height: 39px; box-sizing: border-box; border: 2px solid #8f9196; border-radius: 5px; background: #ebecee; overflow: hidden; margin-right: 36.500px; }
    .query { flex: 1; display: flex; align-items: center; padding-left: 9px; gap: 7.500px; color: #111; letter-spacing: -.4px; }
    .step { box-sizing: border-box; width: 51px; border-left: 2px solid #9c9da0; display: flex; align-items: center; justify-content: center; background: linear-gradient(#f8f8f8, #ececec); }
    .opt { margin-right: 50.500px; }
    .opt + .opt { margin-right: 53px; }
  `;

  render() {
    const lens = (c: string, w: number) => html`<svg width="28" height="28" viewBox="0 0 28 28"><circle cx="10.500" cy="10.500" r="8.500" fill="none" stroke=${c} stroke-width=${w}/><path d="m16.500 17 9 9" stroke=${c} stroke-width=${w + 1}/></svg>`;
    return html`
      <div class="window">
        <div class="tabs">
          <div class="lights"><i></i><i></i><i></i></div>
          <svg class="chev" width="14" height="26" viewBox="0 0 14 26"><path d="M12 2 3 12.500 12 23" fill="none" stroke="#dcdde0" stroke-width="3.600"/></svg>
          <div class="clip"><span>as …</span></div>
          ${TABS.map((t) => html`<div class=${classMap({ tab: true, active: !!t.active })}>${t.icon}<span>${t.label}</span>${t.active ? closeX : null}</div>`)}
          <div class="ctl">
            <svg width="18" height="26" viewBox="0 0 18 26"><path d="m4 2 9 11-9 11" fill="none" stroke="#7b7e86" stroke-width="4"/></svg>
            <svg class="plus" width="21" height="21" viewBox="0 0 21 21"><path d="M10.500 0v21M0 10.500h21" stroke="#dcdde0" stroke-width="4"/></svg>
            <svg class="tri" width="14" height="9" viewBox="0 0 14 9"><path d="M0 0h14L7 9z" fill="#e4e5e7"/></svg>
          </div>
        </div>
        <div class="navbar">
          <div class="url">
            <div class="back"><svg width="26" height="28" viewBox="0 0 26 28"><path d="M24 14H6M14 3 4 14l10 11" fill="none" stroke="#f4f4f5" stroke-width="6"/></svg></div>
            <svg class="info" width="29" height="29" viewBox="0 0 29 29"><circle cx="14.500" cy="14.500" r="12.800" fill="none" stroke="#8d8f92" stroke-width="2"/><path d="M14.500 12.500v9" stroke="#8d8f92" stroke-width="3.600"/><circle cx="14.500" cy="8.500" r="2" fill="#8d8f92"/></svg>
            <div class="sep"></div>
            <span><b>joeyklee.github.io</b>/aloha-r/vancouver311.html</span>
            <svg class="reader" width="32" height="26" viewBox="0 0 32 26"><path d="M16 4.500Q14 2 11 2H2v20h9q4 0 5 2 1-2 5-2h9V2h-9q-3 0-5 2.500v6" fill="none" stroke="#97989a" stroke-width="3"/><path d="M6 7.500h6M6 12h6M6 16.500h6" stroke="#97989a" stroke-width="2"/></svg>
            <div class="sep2"></div>
            <svg class="reload" width="23" height="24" viewBox="0 0 23 24"><path d="M19 19.500A9 9 0 1 1 15.500 5.500" fill="none" stroke="#4b4d50" stroke-width="4"/><path d="M22 0v11H11z" fill="#4b4d50"/></svg>
          </div>
          <div class="search">${lens("#97989a", 3.4)}Search</div>
          <div class="tools">
            ${icon(tools.wrench)}${icon(tools.star)}
            <div class="mark split">${icon(tools.list)}</div>
            ${icon(tools.down)}${icon(tools.home)}${icon(tools.globe)}${icon(tools.smile)}${icon(tools.pocket)}${icon(tools.pin)}${icon(tools.lock)}
            <div class="mark edge">${icon(tools.menu)}</div>
          </div>
        </div>
        <div class="page">
          <h1>Working with our 3-1-1 Data</h1>
          <chrome-window class="shot"></chrome-window>
          <p>So let’s shift gears and work with our 3-1-1 data. We now we have a bunch of points for the month of January and hexagonal grids with the call<br>densities. How do we begin to interact with the data?</p>
        </div>
        <div class="find">
          ${closeX}
          <div class="field">
            <div class="query"><svg width="24" height="26" viewBox="0 0 24 26"><circle cx="9.500" cy="9.500" r="8" fill="none" stroke="#4a4c50" stroke-width="2"/><path d="m15 16 7.500 8" stroke="#4a4c50" stroke-width="2.400"/></svg>aloha</div>
            <div class="step"><svg width="20" height="12" viewBox="0 0 20 12"><path d="m2 10.500 8-8 8 8" fill="none" stroke="#111" stroke-width="3.400"/></svg></div>
            <div class="step"><svg width="20" height="12" viewBox="0 0 20 12"><path d="m2 1.500 8 8 8-8" fill="none" stroke="#111" stroke-width="3.400"/></svg></div>
          </div>
          <span class="opt">Highlight All</span><span class="opt">Match Case</span><span>1 of 2 matches</span>
        </div>
      </div>`;
  }
}
